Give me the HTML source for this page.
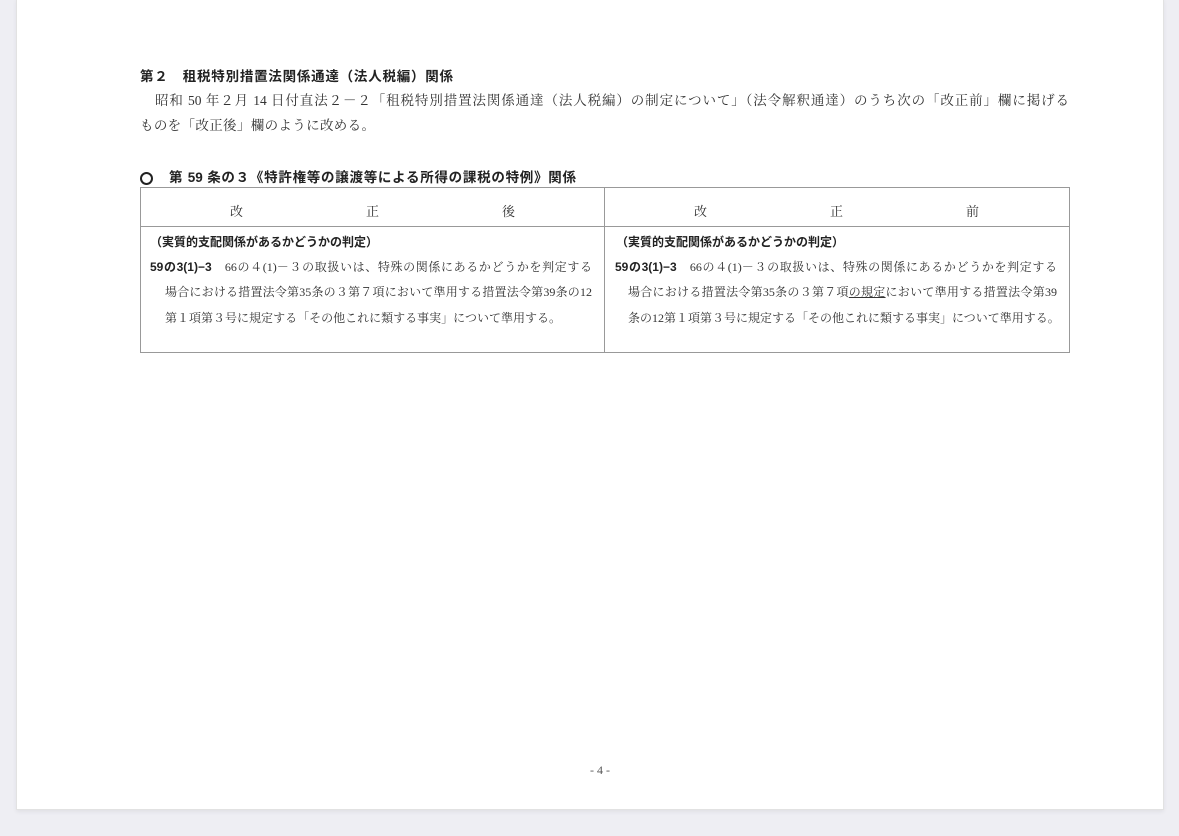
<!DOCTYPE html>
<html><head><meta charset="utf-8"><style>
html,body{margin:0;padding:0;}
body{width:1179px;height:836px;background:#eeeef3;position:relative;overflow:hidden;font-family:"Liberation Serif","Noto Serif CJK SC",serif;color:#333;}
.page{position:absolute;left:16px;top:-2px;width:1146px;height:810px;background:#fff;border:1px solid #e2e2e2;box-shadow:0 2px 4px rgba(0,0,0,0.06);}
.t{position:absolute;white-space:nowrap;line-height:1;text-align:justify;text-align-last:justify;}
.b{font-family:"Liberation Sans","Noto Sans CJK JP",sans-serif;font-weight:bold;color:#222;}
.s{font-size:13.5px;}
.c{font-size:12px;}
.tbl{position:absolute;left:140px;top:187px;width:928px;height:164px;border:1px solid #999;}
.h{position:absolute;left:140px;top:226px;width:930px;border-top:1px solid #999;}
.v{position:absolute;left:604px;top:187px;height:166px;border-left:1px solid #999;}
.hc{position:absolute;font-size:13px;top:201px;}
.circ{position:absolute;left:140px;top:172px;width:9px;height:9px;border:2px solid #222;border-radius:50%;}
</style></head><body>
<div class="page"></div>
<div class="t b s" style="left:140px;top:70px;width:313px;">第２　租税特別措置法関係通達（法人税編）関係</div>
<div class="t s" style="left:155px;top:94px;width:914px;">昭和 50 年２月 14 日付直法２－２「租税特別措置法関係通達（法人税編）の制定について」（法令解釈通達）のうち次の「改正前」欄に掲げる</div>
<div class="t s" style="left:140px;top:119px;width:235px;">ものを「改正後」欄のように改める。</div>
<div class="circ"></div>
<div class="t b s" style="left:169px;top:171px;width:407px;">第 59 条の３《特許権等の譲渡等による所得の課税の特例》関係</div>
<div class="tbl"></div><div class="h"></div><div class="v"></div>
<div class="hc" style="left:230px;">改</div><div class="hc" style="left:366px;">正</div><div class="hc" style="left:502px;">後</div>
<div class="hc" style="left:694px;">改</div><div class="hc" style="left:830px;">正</div><div class="hc" style="left:966px;">前</div>
<div class="t b c" style="left:150px;top:236px;width:228px;">（実質的支配関係があるかどうかの判定）</div>
<div class="t c" style="left:150px;top:261px;width:442px;"><span class="b">59の3(1)−3</span>　66の４(1)－３の取扱いは、特殊の関係にあるかどうかを判定する</div>
<div class="t c" style="left:165px;top:286px;width:427px;">場合における措置法令第35条の３第７項において準用する措置法令第39条の12</div>
<div class="t c" style="left:165px;top:312px;width:396px;">第１項第３号に規定する「その他これに類する事実」について準用する。</div>
<div class="t b c" style="left:616px;top:236px;width:226px;">（実質的支配関係があるかどうかの判定）</div>
<div class="t c" style="left:615px;top:261px;width:442px;"><span class="b">59の3(1)−3</span>　66の４(1)－３の取扱いは、特殊の関係にあるかどうかを判定する</div>
<div class="t c" style="left:628px;top:286px;width:429px;">場合における措置法令第35条の３第７項<span style="text-decoration:underline;">の規定</span>において準用する措置法令第39</div>
<div class="t c" style="left:628px;top:312px;width:429px;">条の12第１項第３号に規定する「その他これに類する事実」について準用する。</div>
<div class="t" style="left:590px;top:764px;font-size:12px;color:#555;">- 4 -</div>
</body></html>
